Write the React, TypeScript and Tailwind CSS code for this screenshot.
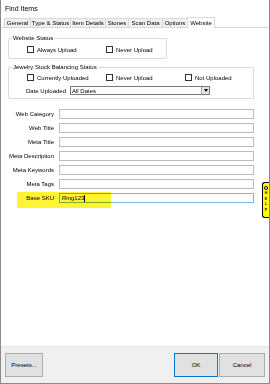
import React from 'react';

const tabs = [
  { label: 'General', w: 26 },
  { label: 'Type & Status', w: 40 },
  { label: 'Item Details', w: 35 },
  { label: 'Stones', w: 23 },
  { label: 'Scan Data', w: 34 },
  { label: 'Options', w: 25 },
];

const fields = ['Web Category', 'Web Title', 'Meta Title', 'Meta Description', 'Meta Keywords', 'Meta Tags'];

const Check: React.FC<{ label: string; className?: string }> = ({ label, className }) => (
  <div className={`flex items-center gap-[3px] whitespace-nowrap ${className ?? ''}`}>
    <span className="w-[7px] h-[7px] border border-[#333] bg-white" />
    <span>{label}</span>
  </div>
);

const App: React.FC = () => {
  return (
    <div className="relative w-[270px] h-[384px] bg-white border-x border-b border-[#8a8a8a] overflow-hidden text-[6px] leading-none text-black font-['Liberation_Sans',sans-serif]">
      {/* title */}
      <div className="h-[17px] flex items-center pl-[4px] text-[7px]">Find Items</div>

      {/* tab strip */}
      <div className="flex items-end h-[11px] pl-[3px] border-b border-[#d9d9d9]">
        {tabs.map(t => (
          <div
            key={t.label}
            style={{ width: t.w }}
            className="h-[9px] flex items-center justify-center border-t border-l border-[#d9d9d9] bg-[#f0f0f0] whitespace-nowrap"
          >
            {t.label}
          </div>
        ))}
        <div className="w-[28px] h-[11px] flex items-center justify-center border-x border-t border-[#d9d9d9] bg-white -mb-px">
          Website
        </div>
      </div>

      {/* website status */}
      <div className="ml-[7px] mt-[10px] w-[159px] h-[21px] border border-[#dcdcdc] rounded-[1px] relative">
        <span className="absolute -top-[4px] left-[3px] bg-white px-[1px]">Website Status</span>
        <div className="flex pt-[7px] pl-[18px]">
          <Check label="Always Upload" className="w-[79px]" />
          <Check label="Never Upload" />
        </div>
      </div>

      {/* jewelry stock */}
      <div className="ml-[7px] mt-[8px] w-[246px] h-[32px] border border-[#dcdcdc] rounded-[1px] relative">
        <span className="absolute -top-[4px] left-[3px] bg-white px-[1px]">Jewelry Stock Balancing Status</span>
        <div className="flex pt-[6px] pl-[18px]">
          <Check label="Currently Uploaded" className="w-[79px]" />
          <Check label="Never Upload" className="w-[79px]" />
          <Check label="Not Uploaded" />
        </div>
        <div className="flex items-center mt-[5px] pl-[17px]">
          <span className="w-[44px] whitespace-nowrap">Date Uploaded</span>
          <div className="w-[140px] h-[9px] border border-[#7a7a7a] flex items-center justify-between pl-[1px]">
            <span>All Dates</span>
            <span className="w-[8px] h-full bg-[#e5e5e5] border-l border-[#aaa] flex items-center justify-center">
              <span className="w-0 h-0 border-x-[2.5px] border-x-transparent border-t-[3px] border-t-black" />
            </span>
          </div>
        </div>
      </div>

      {/* fields */}
      <div className="mt-[10px] flex flex-col gap-[4px]">
        {fields.map(f => (
          <div key={f} className="flex items-center h-[10px]">
            <span className="w-[53px] text-right whitespace-nowrap">{f}</span>
            <div className="ml-[5px] w-[195px] h-[10px] border border-[#bcbcbc] bg-white" />
          </div>
        ))}
        <div className="flex items-center h-[10px]">
          <span className="w-[53px] text-right">Base SKU</span>
          <div className="ml-[5px] w-[195px] h-[10px] border border-[#7eb4ea] bg-white flex items-center pl-[2px]">
            Ring123<span className="w-px h-[7px] bg-black" />
          </div>
        </div>
      </div>

      {/* highlight over Base SKU */}
      <div className="absolute left-[16px] top-[192px] w-[94px] h-[16px] bg-[#fff200] opacity-80 mix-blend-multiply" />

      {/* help tab */}
      <div className="absolute right-0 top-[182px] w-[7px] h-[36px] bg-[#ffff00] border border-r-0 border-black rounded-l-[3px] flex flex-col items-center pt-[3px] gap-[2px] text-[3.5px] font-bold">
        <span className="w-[4px] h-[4px] rounded-full border border-black bg-white" />
        <span>H</span>
        <span>E</span>
        <span>L</span>
        <span>P</span>
      </div>

      {/* bottom bar */}
      <div className="absolute left-0 right-0 bottom-0 h-[37px] bg-[#f0f0f0] border-t border-[#e3e3e3] flex items-center px-[4px]">
        <button className="w-[38px] h-[24px] bg-[#e1e1e1] border border-[#adadad]">Presets...</button>
        <div className="flex-1" />
        <button className="w-[44px] h-[24px] bg-[#e1e1e1] border border-[#0078d7]">OK</button>
        <button className="w-[46px] h-[24px] bg-[#e1e1e1] border border-[#adadad] ml-px">Cancel</button>
      </div>
    </div>
  );
};

export default App;
